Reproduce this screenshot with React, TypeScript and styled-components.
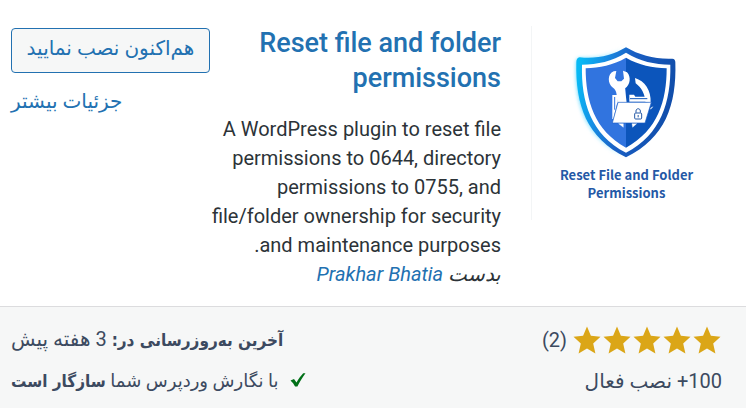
import React from "react";
import styled, { createGlobalStyle } from "styled-components";

const GlobalStyle = createGlobalStyle`
  * { box-sizing: border-box; }
  body {
    margin: 0;
    background: #fff;
    color: #2c3338;
    font-family: Roboto, "DejaVu Sans", sans-serif;
    font-size: 20px;
    line-height: 29px;
  }
`;

const Card = styled.article`
  display: flex;
  flex-direction: column;
`;

const Main = styled.div`
  display: grid;
  grid-template-columns: 190px 1fr 199px;
  align-items: start;
  padding: 26px 25px 17px 11px;
  border-bottom: 1px solid #dcdcde;
`;

const LogoPanel = styled.div`
  display: flex;
  flex-direction: column;
  align-items: center;
  height: 194px;
  padding-top: 19px;
  border-left: 1px solid #f3f5f6;
`;

const LogoCaption = styled.div`
  display: flex;
  flex-direction: column;
  align-items: center;
  margin-top: 6px;
  color: #2458a6;
  font: 700 13px/18px "Noto Sans CJK SC", sans-serif;
  direction: ltr;
`;

const Info = styled.div`
  padding-right: 30px;
`;

const Title = styled.h3`
  margin: 0 0 19px;
  font-size: 27px;
  font-weight: 500;
  line-height: 35px;
`;

const Link = styled.a`
  color: #2271b1;
  text-decoration: none;
`;

const Paragraph = styled.p`
  margin: 0;
`;

const Author = styled.p`
  margin: 0;
  font-style: italic;
`;

const Actions = styled.div`
  display: flex;
  flex-direction: column;
  align-items: flex-end;
  gap: 14px;
  padding-top: 2px;
`;

const InstallButton = styled.button`
  width: 100%;
  height: 45px;
  padding: 0 12px 4px;
  border: 1px solid #2271b1;
  border-radius: 4px;
  background: #f6f7f7;
  color: #2271b1;
  font: inherit;
  white-space: nowrap;
`;

const Footer = styled.footer`
  display: grid;
  grid-template-columns: auto auto;
  justify-content: space-between;
  row-gap: 11px;
  padding: 18px 24px 14px 11px;
  background: #f6f7f7;
  color: #3c4a60;
`;

const Meta = styled.div<{ $end?: boolean; $small?: boolean }>`
  display: flex;
  align-items: center;
  justify-content: ${(p) => (p.$end ? "flex-end" : "flex-start")};
  gap: ${(p) => (p.$end ? 10 : 5)}px;
  font-size: ${(p) => (p.$small ? 18 : 20)}px;
  white-space: nowrap;
`;

const Strong = styled.strong`
  font-family: "DejaVu Sans Condensed", "DejaVu Sans", sans-serif;
  font-size: 17px;
`;

const Stars = styled.div`
  display: flex;
`;

function Star() {
  return (
    <svg width="30" height="30" viewBox="0 0 20 20" aria-hidden="true">
      <path d="M10 1l2.600 6.200 6.400.55-4.870 4.620L15.600 19 10 15.700 4.400 19l1.470-6.630L1 7.750l6.400-.55z" fill="#dba617" />
    </svg>
  );
}

function Check() {
  return (
    <svg width="18" height="18" viewBox="0 0 18 18" aria-hidden="true">
      <path d="M1.500 8.500l3.500-1.600 2.500 3.600C9.600 7 12 3.500 14.200 1.300h2.300C13.300 5.500 10.800 9.800 8.400 14.600H6.100C4.900 12.300 3.500 10.300 1.500 8.500z" fill="#007017" />
    </svg>
  );
}

function Shield() {
  return (
    <svg width="125" height="115" viewBox="0 0 375 345" role="img" aria-label="Reset File and Folder Permissions">
      <defs>
        <linearGradient id="rim" x1="0" y1="0.3" x2="1" y2="0.5">
          <stop offset="0" stopColor="#08baf5" />
          <stop offset="0.25" stopColor="#178ce3" />
          <stop offset="0.5" stopColor="#1a5fc4" />
          <stop offset="1" stopColor="#104ca8" />
        </linearGradient>
        <linearGradient id="glow">
          <stop offset="0" stopColor="#20c8ff" />
          <stop offset="0.5" stopColor="#20c8ff" stopOpacity="0" />
        </linearGradient>
        <filter id="soft" x="-10%" y="-10%" width="120%" height="120%">
          <feGaussianBlur stdDeviation="6" />
        </filter>
      </defs>
      <path d="M186 7C146 31 98 43 47 41Q39 42 39 52C34 181 68 279 186 337C304 279 338 181 334 52Q334 42 325 41C274 43 226 31 186 7z" fill="url(#glow)" filter="url(#soft)" />
      <path d="M186 7C146 31 98 43 47 37Q37 38 37 52C34 181 68 279 186 337C304 279 338 181 334 52Q334 42 325 41C274 43 226 31 186 7z" fill="url(#rim)" />
      <path d="M186 23C144 49 101 58 54 59C51 170 80 268 186 323C292 268 321 170 319 59C271 58 228 49 186 23z" fill="#fff" />
      <path d="M186 38C146 61 107 68 65 70C65 167 91 256 186 308z" fill="#3174df" />
      <path d="M186 38C226 61 265 68 308 70C308 167 282 256 186 308z" fill="#0c55bb" />
      <path d="M213 99C242 108 262 135 260 174L244 170C243 146 232 128 215 115z" fill="#fff" />
      <path d="M145 150h15v22l-12 50h-3z" fill="#fff" />
      <path d="M152 156v38" fill="none" stroke="#3174df" strokeWidth="3" />
      <path d="M196 149h14l4 6h38v15h-56z" fill="#fff" />
      <path d="M198 161h52" fill="none" stroke="#0c55bb" strokeWidth="3" />
      <path d="M149 79C130 86 130 117 147 128C158 136 158 145 160 173H188L183 130C199 121 202 95 189 82L177 77L180 101L172 109L161 109L153 99L157 78z" fill="#fff" />
      <path d="M162 172H262L243 234H145z" fill="#fff" stroke="#1c5fc9" strokeWidth="2" />
      <path d="M260 189l7-4-7 8zM164 236h14v11zM204 236h14l-12 11z" fill="#fff" stroke="#fff" strokeWidth="1" />
      <rect x="212" y="204" width="21" height="18" rx="3" fill="none" stroke="#2458a6" strokeWidth="3" />
      <path d="M216 203v-5c0-9 13-9 13 0v5M222.500 210v7" fill="none" stroke="#2458a6" strokeWidth="3" />
    </svg>
  );
}

export default function App() {
  return (
    <>
      <GlobalStyle />
      <Card dir="rtl" lang="fa">
        <Main>
          <LogoPanel>
            <Shield />
            <LogoCaption>
              <span>Reset File and Folder</span>
              <span>Permissions</span>
            </LogoCaption>
          </LogoPanel>
          <Info>
            <Title>
              <Link href="#plugin">Reset file and folder permissions</Link>
            </Title>
            <Paragraph>
              A WordPress plugin to reset file permissions to 0644, directory permissions to 0755, and file/folder
              ownership for security and maintenance purposes.
            </Paragraph>
            <Author>
              بدست <Link href="#author">Prakhar Bhatia</Link>
            </Author>
          </Info>
          <Actions>
            <InstallButton type="button">هم‌اکنون نصب نمایید</InstallButton>
            <Link href="#details">جزئیات بیشتر</Link>
          </Actions>
        </Main>
        <Footer>
          <Meta>
            <Stars role="img" aria-label="5 / 5">
              {[1, 2, 3, 4, 5].map((n) => (
                <Star key={n} />
              ))}
            </Stars>
            <span>(2)</span>
          </Meta>
          <Meta $end>
            <span>
              <Strong>آخرین به‌روزرسانی در:</Strong> 3 هفته پیش
            </span>
          </Meta>
          <Meta>
            <span>100+ نصب فعال</span>
          </Meta>
          <Meta $end $small>
            <Check />
            <span>
              با نگارش وردپرس شما <Strong>سازگار است</Strong>
            </span>
          </Meta>
        </Footer>
      </Card>
    </>
  );
}
